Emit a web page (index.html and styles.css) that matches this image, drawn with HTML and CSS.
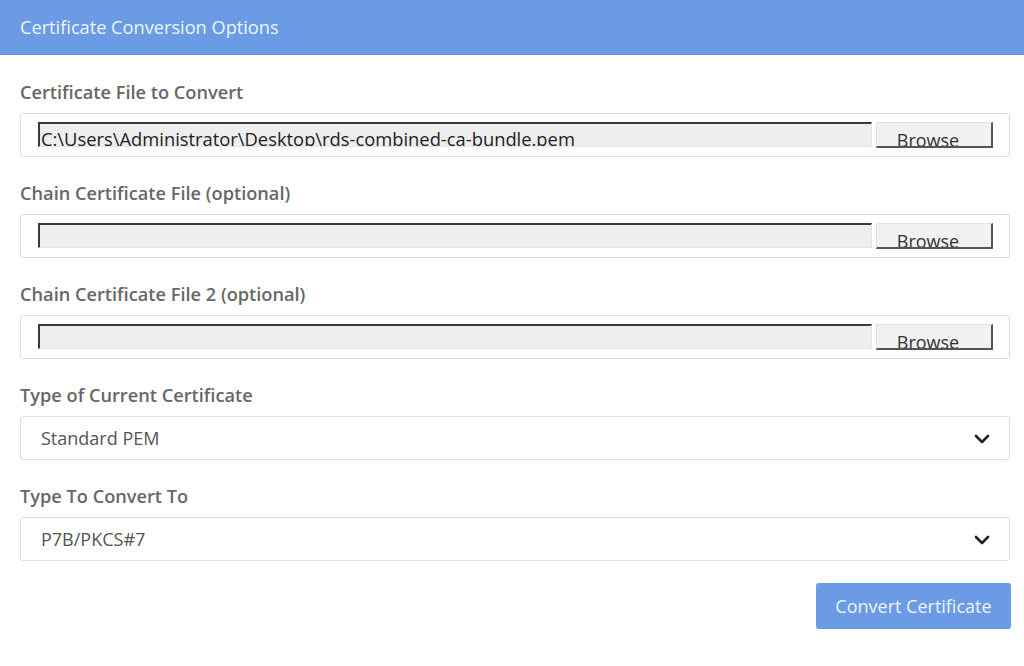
FILE: index.html
```html
<!DOCTYPE html>
<html>
<head>
<meta charset="utf-8">
<link rel="stylesheet" href="styles.css">
</head>
<body>
<div class="panel">
  <div class="panel-header">Certificate Conversion Options</div>
  <div class="panel-body">
    <div class="group">
      <div class="label">Certificate File to Convert</div>
      <div class="file-box">
        <div class="file-field"><span class="file-text">C:\Users\Administrator\Desktop\rds-combined-ca-bundle.pem</span></div>
        <div class="browse"><span>Browse</span></div>
      </div>
    </div>
    <div class="group">
      <div class="label">Chain Certificate File (optional)</div>
      <div class="file-box">
        <div class="file-field"><span class="file-text"></span></div>
        <div class="browse"><span>Browse</span></div>
      </div>
    </div>
    <div class="group">
      <div class="label">Chain Certificate File 2 (optional)</div>
      <div class="file-box">
        <div class="file-field"><span class="file-text"></span></div>
        <div class="browse"><span>Browse</span></div>
      </div>
    </div>
    <div class="group">
      <div class="label">Type of Current Certificate</div>
      <div class="select">
        <span>Standard PEM</span>
        <svg class="chev" width="16" height="10" viewBox="0 0 16 10"><path d="M2 2 L8 8 L14 2" fill="none" stroke="#222" stroke-width="2.6" stroke-linecap="round" stroke-linejoin="round"/></svg>
      </div>
    </div>
    <div class="group">
      <div class="label">Type To Convert To</div>
      <div class="select">
        <span>P7B/PKCS#7</span>
        <svg class="chev" width="16" height="10" viewBox="0 0 16 10"><path d="M2 2 L8 8 L14 2" fill="none" stroke="#222" stroke-width="2.6" stroke-linecap="round" stroke-linejoin="round"/></svg>
      </div>
    </div>
    <div class="actions">
      <button class="convert">Convert Certificate</button>
    </div>
  </div>
</div>
</body>
</html>
```
FILE: styles.css
```css
html, body {
  margin: 0;
  padding: 0;
  background: #fff;
}
body {
  font-family: "Open Sans", "Liberation Sans", sans-serif;
  width: 1024px;
  height: 666px;
  overflow: hidden;
}
.panel-header {
  height: 54px;
  background: #6a9be4;
  border-bottom: 1px solid #5d8bd2;
  color: #eef5ff;
  font-size: 18.2px;
  line-height: 54px;
  padding-left: 20px;
}
.panel-body {
  padding: 27px 14px 0 20px;
  display: flex;
  flex-direction: column;
  gap: 26px;
}
.label {
  font-size: 18.2px;
  font-weight: 600;
  color: #676767;
  line-height: 22px;
  margin-bottom: 9px;
  margin-top: -1px;
  padding-bottom: 1px;
}
.file-box {
  height: 42px;
  border: 1px solid #dcdcdc;
  border-radius: 3px;
  display: flex;
  align-items: flex-start;
  padding: 0 16px 0 17px;
}
.file-field {
  margin-top: 8px;
  flex: 1;
  height: 25px;
  box-sizing: border-box;
  background: #eeeeee;
  border-top: 2px solid #3a3a3a;
  border-left: 2px solid #3a3a3a;
  border-right: 1px solid #e4e4e4;
  border-bottom: 1px solid #e4e4e4;
  overflow: hidden;
}
.file-text {
  display: block;
  font-size: 18.35px;
  color: #222;
  line-height: 22px;
  padding-left: 1px;
  margin-top: 4px;
  white-space: nowrap;
}
.browse {
  margin-top: 8px;
  margin-left: 4px;
  width: 117px;
  height: 26px;
  box-sizing: border-box;
  background: #f1f1f1;
  border-top: 1px solid #e2e2e2;
  border-left: 1px solid #e2e2e2;
  border-right: 2px solid #555;
  border-bottom: 2px solid #555;
  overflow: hidden;
  text-align: center;
  padding-right: 12px;
}
.browse span {
  display: block;
  font-size: 18px;
  color: #333;
  line-height: 22px;
  margin-top: 6px;
}
.select {
  height: 42px;
  border: 1px solid #dcdcdc;
  border-radius: 3px;
  display: flex;
  align-items: center;
  justify-content: space-between;
  padding: 0 19px 0 20px;
  font-size: 18px;
  color: #555;
}
.chev {
  display: block;
  margin-top: 1px;
}
.actions {
  display: flex;
  justify-content: flex-end;
  margin-top: -4px;
}
.convert {
  width: 195px;
  height: 46px;
  background: #6a9be4;
  border: none;
  border-radius: 3px;
  color: #eef5ff;
  font-family: "Open Sans", sans-serif;
  font-size: 18px;
  cursor: pointer;
  margin-right: -1px;
}
```
